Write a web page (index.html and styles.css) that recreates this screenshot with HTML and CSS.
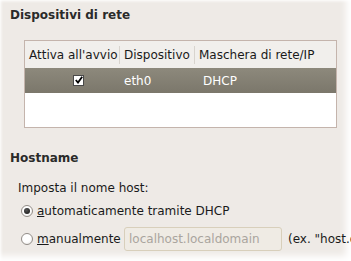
FILE: index.html
```html
<!DOCTYPE html>
<html>
<head>
<meta charset="utf-8">
<link rel="stylesheet" href="styles.css">
</head>
<body>
<div class="screen">
  <div class="section-title">Dispositivi di rete</div>
  <div class="table">
    <div class="row head">
      <div class="c1">Attiva all'avvio</div>
      <div class="c2">Dispositivo</div>
      <div class="c3">Maschera di rete/IP</div>
    </div>
    <div class="row sel">
      <div class="c1"><span class="check"><svg width="8" height="8" viewBox="0 0 8 8"><path d="M0.8 4 L3 6.6 L7.2 0.8" fill="none" stroke="#000" stroke-width="1.8"/></svg></span></div>
      <div class="c2">eth0</div>
      <div class="c3">DHCP</div>
    </div>
  </div>
  <div class="section-title host">Hostname</div>
  <div class="label">Imposta il nome host:</div>
  <div class="opt opt1"><span class="radio on"></span><span><u>a</u>utomaticamente tramite DHCP</span></div>
  <div class="opt opt2"><span class="radio"></span><span class="man"><u>m</u>anualmente</span><span class="field">localhost.localdomain</span><span class="ex">(ex. "host.domain.com")</span></div>
</div>
</body>
</html>
```
FILE: styles.css
```css
html, body { margin: 0; padding: 0; background: #fff; }
body { width: 351px; height: 261px; overflow: hidden; }
.screen {
  width: 351px; height: 261px; box-sizing: border-box;
  background: #eeeae6;
  box-shadow: inset -8px -8px 7px -3px #fff, inset 3px 3px 3px -2px #fff;
  font-family: "DejaVu Sans", sans-serif; font-size: 12px; color: #1a1a1a;
  padding: 8px 0 0 10px;
  white-space: nowrap; overflow: hidden;
}
.section-title { font-weight: bold; font-size: 12px; color: #2a2a2a; height: 18px; }
.table {
  margin: 14px 0 0 14px; width: 313px; height: 88px;
  border: 1px solid #c4b4ac; background: #fff; box-sizing: border-box;
}
.row { display: flex; }
.head { background: #f1efec; height: 27px; padding-top: 5px; box-sizing: border-box; align-items: flex-start; }
.head > div { border-right: 1px solid #d8d4ce; height: 18px; line-height: 18px; padding-left: 4px; box-sizing: border-box; }
.head .c3 { border-right: none; }
.c1 { width: 95px; flex-shrink: 0; }
.c2 { width: 75px; flex-shrink: 0; }
.c3 { flex: 1; }
.sel { background: linear-gradient(#8d897c, #7b776b); color: #fff; height: 25px; align-items: center; }
.sel .c1 { text-align: center; }
.sel .c2, .sel .c3 { padding-left: 4px; }
.check { display: inline-flex; width: 11px; height: 11px; background: #fff; border: 1px solid #4a4a4a; box-sizing: border-box; align-items: center; justify-content: center; vertical-align: middle; margin-left: 12px; margin-top: -2px; }
.host { margin-top: 23px; }
.label { margin: 12px 0 0 8px; height: 18px; }
.opt { display: flex; align-items: center; margin-left: 11px; height: 24px; }
.opt1 { margin-top: 0; }
.opt2 { margin-top: 4px; }
.radio { flex-shrink: 0; width: 12px; height: 12px; border-radius: 50%; border: 1px solid #928d88; background: radial-gradient(circle at 40% 35%, #fff 50%, #e4e0dc); margin-right: 4px; box-sizing: border-box; position: relative; }
.radio.on::after { content: ""; position: absolute; left: 2px; top: 2px; width: 6px; height: 6px; border-radius: 50%; background: radial-gradient(circle at 40% 35%, #555, #111); }
.man { width: 78px; flex-shrink: 0; }
.field { flex-shrink: 0; margin-left: 9px; width: 158px; height: 24px; box-sizing: border-box; border: 1px solid #d8cfbb; border-radius: 3px; background: #efebe4; color: #aaa59e; padding-left: 4px; line-height: 22px; }
.ex { margin-left: 6px; }
```
